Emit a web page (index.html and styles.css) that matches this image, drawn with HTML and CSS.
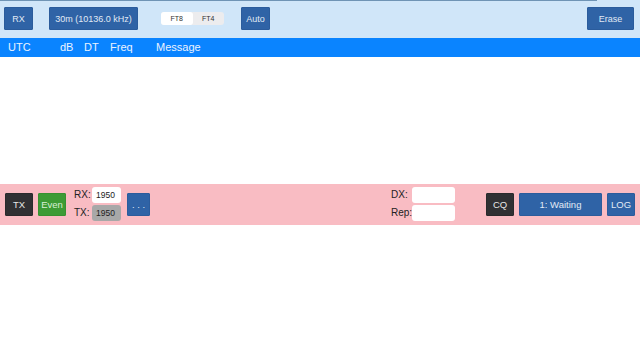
FILE: index.html
```html
<!DOCTYPE html>
<html lang="en">
<head>
  <meta charset="UTF-8">
  <meta name="viewport" content="width=device-width, initial-scale=1">
  <title>FT8 decoder</title>
  <link rel="stylesheet" href="styles.css">
</head>
<body>

<header class="topbar">
  <div class="progress"></div>
  <button class="btn btn-rx">RX</button>
  <button class="btn btn-band">30m (10136.0 kHz)</button>
  <div class="segment">
    <span class="seg seg-on">FT8</span>
    <span class="seg">FT4</span>
  </div>
  <button class="btn btn-auto">Auto</button>
  <button class="btn btn-erase">Erase</button>
</header>

<div class="cols">
  <span class="col-utc">UTC</span>
  <span class="col-db">dB</span>
  <span class="col-dt">DT</span>
  <span class="col-freq">Freq</span>
  <span class="col-msg">Message</span>
</div>

<main class="log"></main>

<section class="ctrl">
  <button class="btn btn-dark btn-tx">TX</button>
  <button class="btn btn-green">Even</button>
  <div class="freqs">
    <label class="row"><span class="lbl">RX:</span><input class="field" value="1950"></label>
    <label class="row"><span class="lbl">TX:</span><input class="field field-off" value="1950"></label>
  </div>
  <button class="btn btn-more">. . .</button>

  <div class="calls">
    <label class="row"><span class="lbl">DX:</span><input class="field field-wide"></label>
    <label class="row"><span class="lbl">Rep:</span><input class="field field-wide"></label>
  </div>
  <button class="btn btn-dark btn-cq">CQ</button>
  <button class="btn btn-state">1: Waiting</button>
  <button class="btn btn-log">LOG</button>
</section>

</body>
</html>
```

FILE: styles.css
```css
*, *:after, *:before {
  box-sizing: border-box;
}
body {
  background: #FFF;
  color: #222;
  font-family: "Liberation Sans", Roboto, sans-serif;
  margin: 0;
  width: 640px;
}
button, input {
  font-family: inherit;
}
.btn {
  background: #2F63A6;
  border: 1px solid #2B5C9C;
  border-radius: 1px;
  color: #E1EAF5;
  font-size: 9px;
  height: 23px;
  margin: 0;
  padding: 0;
}

/* top bar */
.topbar {
  align-items: center;
  background: #D0E6F9;
  display: flex;
  height: 38px;
  padding: 0 6px 1px 4px;
  position: relative;
}
.progress {
  background: #6F94B5;
  height: 1px;
  left: 0;
  position: absolute;
  top: 0;
  width: 597px;
}
.btn-rx {
  width: 29px;
}
.btn-band {
  margin-left: 16px;
  width: 89px;
}
.segment {
  background: #ECECEE;
  border-radius: 3px;
  display: flex;
  height: 13px;
  margin-left: 23px;
  width: 63px;
}
.seg {
  color: #333;
  flex: 1;
  font-size: 7px;
  line-height: 13px;
  text-align: center;
}
.seg-on {
  background: #FFF;
  border-radius: 3px;
}
.btn-auto {
  margin-left: 17px;
  width: 29px;
}
.btn-erase {
  margin-left: auto;
  width: 47px;
}

/* column header */
.cols {
  background: #0A84FF;
  color: #EAF3FF;
  display: flex;
  font-size: 11px;
  height: 19px;
  line-height: 19px;
}
.col-utc { margin-left: 8px; width: 52px; }
.col-db { width: 24px; }
.col-dt { width: 26px; }
.col-freq { width: 46px; }

.log {
  height: 127px;
}

/* controls */
.ctrl {
  align-items: center;
  background: #F9BCC3;
  display: flex;
  height: 41px;
  padding: 0 5px 0 5px;
}
.ctrl .btn {
  font-size: 9.5px;
}
.btn-dark {
  background: #303033;
  border-color: #2A2A2C;
  color: #E6E6E6;
}
.btn-tx {
  width: 28px;
}
.btn-green {
  background: #3D9B35;
  border-color: #379131;
  color: #D8EFD4;
  margin-left: 5px;
  width: 28px;
}
.freqs, .calls {
  display: flex;
  flex-direction: column;
  gap: 2px;
  margin-top: -2px;
}
.freqs {
  margin-left: 8px;
}
.row {
  align-items: center;
  display: flex;
  font-size: 10px;
}
.lbl {
  width: 18px;
}
.field {
  background: #FFF;
  border: none;
  border-radius: 3px;
  color: #222;
  font-size: 8.5px;
  height: 16px;
  padding: 0 0 0 4px;
  width: 29px;
}
.field-off {
  background: #A8A8A8;
}
.btn-more {
  margin-left: 6px;
  width: 23px;
}
.calls {
  margin-left: auto;
}
.calls .lbl {
  width: 21px;
}
.field-wide {
  width: 43px;
}
.btn-cq {
  margin-left: 31px;
  width: 28px;
}
.btn-state {
  margin-left: 5px;
  width: 83px;
}
.btn-log {
  margin-left: 5px;
  width: 28px;
}
```
